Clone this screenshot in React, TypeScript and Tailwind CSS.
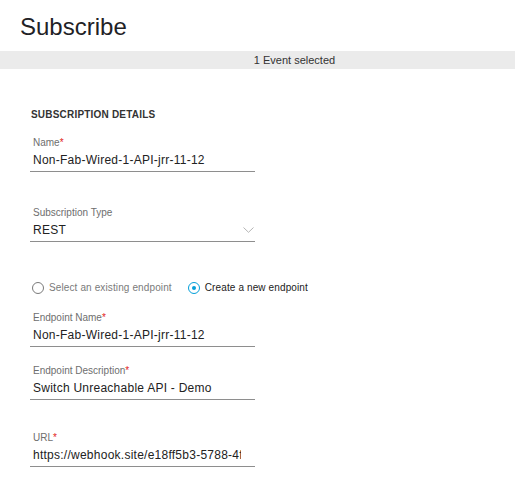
import React from "react";

interface FieldProps {
  label: string;
  value: string;
  required?: boolean;
  className?: string;
}

const Field: React.FC<FieldProps> = ({ label, value, required, className }) => (
  <div className={`w-[225px] border-b border-[#8e8e8e] pb-[3px] ${className ?? ""}`}>
    <div className="pl-[3px] text-[10px] leading-[12px] text-[#6e6e6e]">
      {label}
      {required && <span className="text-[#e2231a]">*</span>}
    </div>
    <div className="ml-[3px] mr-[14px] mt-[3px] overflow-hidden whitespace-nowrap text-[12px] leading-[16px] tracking-[0.25px] text-[#222]">
      {value}
    </div>
  </div>
);

const Radio: React.FC<{ checked?: boolean; label: string }> = ({ checked, label }) => (
  <div className="flex items-center gap-[5px]">
    <span
      className={`flex h-[12px] w-[12px] items-center justify-center rounded-full border ${
        checked ? "border-[#049fd9]" : "border-[#7a7a7a]"
      }`}
    >
      {checked && <span className="h-[4px] w-[4px] rounded-full bg-[#049fd9]" />}
    </span>
    <span
      className={`text-[10px] leading-[12px] tracking-[0.12px] ${
        checked ? "text-[#222]" : "text-[#7a7a7a]"
      }`}
    >
      {label}
    </span>
  </div>
);

export default function App() {
  return (
    <div className="h-[487px] w-[515px] overflow-hidden bg-white font-['Liberation_Sans',Arial,sans-serif]">
      <h1 className="pl-[20px] pt-[13px] text-[24px] leading-[28px] text-[#1f2226]">
        Subscribe
      </h1>
      <div className="mt-[10px] flex h-[18px] items-center justify-center bg-[#ebebeb] pl-[74px] text-[11px] text-[#333]">
        1 Event selected
      </div>

      <div className="px-[30px]">
        <h2 className="ml-px mt-[40px] text-[10px] font-bold leading-[12px] tracking-[0.2px] text-[#333]">
          SUBSCRIPTION DETAILS
        </h2>

        <Field
          className="mt-[16px]"
          label="Name"
          required
          value="Non-Fab-Wired-1-API-jrr-11-12"
        />

        <div className="mt-[35px] w-[225px] border-b border-[#8e8e8e] pb-[3px]">
          <div className="pl-[3px] text-[10px] leading-[12px] text-[#6e6e6e]">
            Subscription Type
          </div>
          <div className="mt-[3px] flex items-center justify-between pl-[3px] pr-[1px]">
            <span className="text-[12px] leading-[16px] tracking-[0.25px] text-[#222]">
              REST
            </span>
            <svg width="11" height="6" viewBox="0 0 11 6" fill="none">
              <path d="M0.5 0.5 L5.5 5.3 L10.5 0.5" stroke="#b5b5b5" strokeWidth="1" />
            </svg>
          </div>
        </div>

        <div className="ml-[2px] mt-[40px] flex items-center gap-[16px]">
          <Radio label="Select an existing endpoint" />
          <Radio checked label="Create a new endpoint" />
        </div>

        <Field
          className="mt-[18px]"
          label="Endpoint Name"
          required
          value="Non-Fab-Wired-1-API-jrr-11-12"
        />
        <Field
          className="mt-[18px]"
          label="Endpoint Description"
          required
          value="Switch Unreachable API - Demo"
        />
        <Field
          className="mt-[32px]"
          label="URL"
          required
          value="https://webhook.site/e18ff5b3-5788-4f2a-9c61-3d7b8e0a1f42"
        />
      </div>
    </div>
  );
}
